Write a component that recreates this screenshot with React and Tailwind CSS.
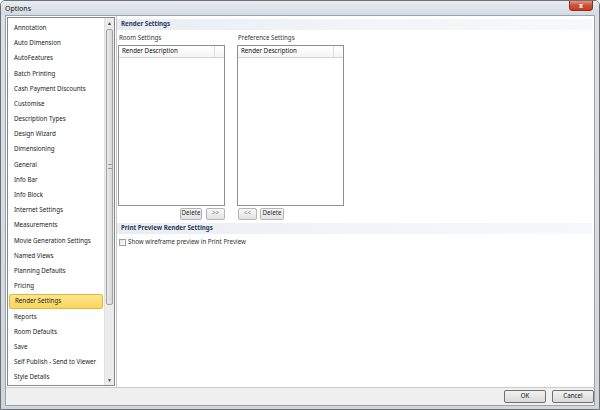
import React from 'react';

const items = [
  'Annotation',
  'Auto Dimension',
  'AutoFeatures',
  'Batch Printing',
  'Cash Payment Discounts',
  'Customise',
  'Description Types',
  'Design Wizard',
  'Dimensioning',
  'General',
  'Info Bar',
  'Info Block',
  'Internet Settings',
  'Measurements',
  'Movie Generation Settings',
  'Named Views',
  'Planning Defaults',
  'Pricing',
  'Render Settings',
  'Reports',
  'Room Defaults',
  'Save',
  'Self Publish - Send to Viewer',
  'Style Details',
];

const Btn = ({ children, w }) => (
  <div
    className={`${w} h-[12px] flex items-center justify-center border border-[#b5b5b5] rounded-[2px] bg-gradient-to-b from-[#f8f8f8] to-[#e2e2e2] text-[#222]`}
  >
    {children}
  </div>
);

const SectionHeader = ({ children }) => (
  <div className="h-[11px] flex items-center pl-[4px] bg-gradient-to-r from-[#e9edf2] via-[#f2f4f7] to-[#f7f8fa] font-bold text-[#1e395b]">
    {children}
  </div>
);

const ListBox = () => (
  <div className="w-[107px] h-[161px] border border-[#8e8f8f] bg-white flex flex-col">
    <div className="h-[12px] flex border-b border-[#d5d5d5] bg-gradient-to-b from-white to-[#f4f4f4]">
      <div className="w-[96px] pl-[3px] flex items-center border-r border-[#dcdcdc] text-[#111]">Render Description</div>
      <div className="flex-1" />
    </div>
  </div>
);

export default function App() {
  return (
    <div
      className="w-[600px] h-[410px] bg-gradient-to-b from-[#dbe2ea] to-[#cfd6de] border border-[#707070] rounded-t-[5px] flex flex-col text-[6.2px] leading-none overflow-hidden whitespace-nowrap"
      style={{ fontFamily: '"Noto Sans", "Open Sans", Arial, sans-serif' }}
    >
      {/* title bar */}
      <div className="h-[17px] flex items-center justify-between pl-[4px] pr-[6px] bg-gradient-to-b from-[#e8ecf1] via-[#dde3ea] to-[#d3dae2]">
        <span className="text-[7px] text-[#111] mt-[2px]">Options</span>
        <div className="w-[24px] h-[12px] -mt-[5px] rounded-b-[3px] bg-gradient-to-b from-[#e8a393] via-[#d0533b] to-[#c33d22] border border-[#8c2f1e] flex items-center justify-center text-white text-[7px] font-bold">
          x
        </div>
      </div>

      {/* client area */}
      <div className="flex-1 mx-[4px] mb-[3px] border border-[#9aa3ad] bg-[#f0f0f0] flex flex-col">
        <div className="flex-1 flex bg-white">
          {/* left list */}
          <div className="w-[108px] ml-[1px] my-[1px] border border-[#828790] flex bg-white">
            <div className="flex-1 flex flex-col pt-[3px] pl-[1px] pr-[1px]">
              {items.map((it) => (
                <div
                  key={it}
                  className={`h-[15.2px] shrink-0 flex items-center pl-[5px] text-[#1a1a1a] ${
                    it === 'Render Settings'
                      ? 'bg-gradient-to-b from-[#fde58c] to-[#fbd65a] border border-[#e6b53b] rounded-[2px]'
                      : ''
                  }`}
                >
                  {it}
                </div>
              ))}
            </div>
            {/* scrollbar */}
            <div className="w-[10px] bg-[#ececec] border-l border-[#e2e2e2] flex flex-col">
              <div className="h-[11px] flex items-center justify-center text-[5px] text-[#444]">▲</div>
              <div className="h-[276px] mx-[1px] bg-gradient-to-r from-[#e9e9e9] to-[#d8d8d8] border border-[#a3a3a3] rounded-[2px] flex items-center justify-center">
                <div className="w-[4px] h-[5px] border-y border-[#9a9a9a]" />
              </div>
              <div className="flex-1" />
              <div className="h-[10px] flex items-center justify-center text-[5px] text-[#444]">▼</div>
            </div>
          </div>

          {/* right content */}
          <div className="flex-1 border-l border-[#c7c7c7] ml-[1px] pt-[3px] pr-[2px] flex flex-col">
            <SectionHeader>Render Settings</SectionHeader>
            <div className="flex gap-[12px] pl-[1px] mt-[3px]">
              <div className="flex flex-col">
                <div className="h-[12px] pl-[1px] pt-[2px] text-[#333]">Room Settings</div>
                <ListBox />
                <div className="flex justify-end gap-[4px] mt-[2px]">
                  <Btn w="w-[22px]">Delete</Btn>
                  <Btn w="w-[19px]"><span className="text-[#888]">&gt;&gt;</span></Btn>
                </div>
              </div>
              <div className="flex flex-col">
                <div className="h-[12px] pl-[1px] pt-[2px] text-[#333]">Preference Settings</div>
                <ListBox />
                <div className="flex gap-[3px] mt-[2px] pl-[1px]">
                  <Btn w="w-[19px]"><span className="text-[#888]">&lt;&lt;</span></Btn>
                  <Btn w="w-[24px]">Delete</Btn>
                </div>
              </div>
            </div>
            <div className="mt-[3px]">
              <SectionHeader>Print Preview Render Settings</SectionHeader>
            </div>
            <div className="flex items-center gap-[2px] pl-[2px] mt-[5px] text-[#333]">
              <div className="w-[7px] h-[7px] border border-[#a0a0a0] bg-gradient-to-br from-[#e8e8e8] to-[#fafafa]" />
              <span>Show wireframe preview in Print Preview</span>
            </div>
          </div>
        </div>

        {/* bottom bar */}
        <div className="h-[18px] border-t border-[#c9c9c9] bg-[#f0f0f0] flex items-center justify-end gap-[6px] pr-[0px]">
          <div className="w-[42px] h-[13px] flex items-center justify-center border border-[#707070] rounded-[2px] bg-gradient-to-b from-[#f2f2f2] to-[#d9d9d9] text-[#111]">OK</div>
          <div className="w-[42px] h-[13px] flex items-center justify-center border border-[#707070] rounded-[2px] bg-gradient-to-b from-[#f2f2f2] to-[#d9d9d9] text-[#111]">Cancel</div>
        </div>
      </div>
    </div>
  );
}
